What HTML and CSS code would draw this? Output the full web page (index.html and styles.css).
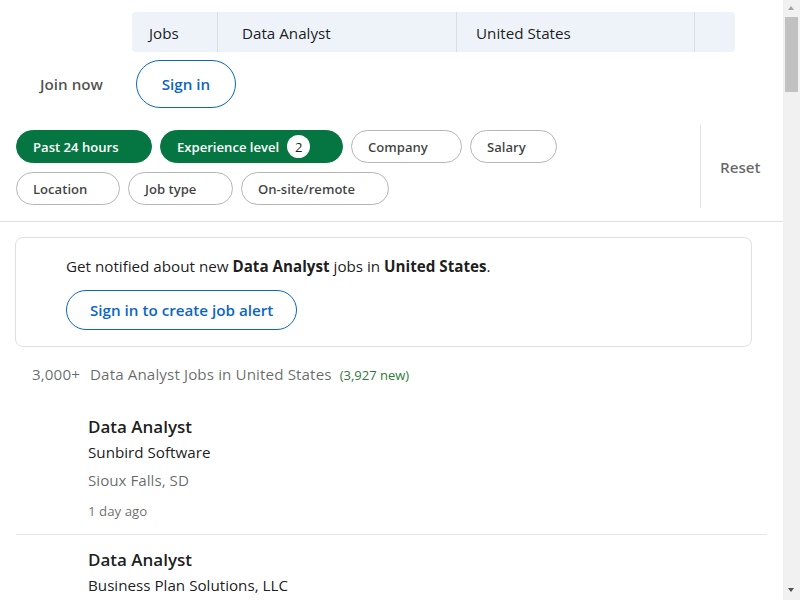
FILE: index.html
```html
<!DOCTYPE html>
<html lang="en">
<head>
<meta charset="utf-8">
<title>Data Analyst Jobs in United States</title>
<link rel="stylesheet" href="styles.css">
</head>
<body>
<header class="top">
  <div class="search">
    <div class="seg seg-jobs">Jobs</div>
    <div class="seg seg-kw">Data Analyst</div>
    <div class="seg seg-loc">United States</div>
    <div class="seg seg-btn"></div>
  </div>
  <div class="auth">
    <a class="join">Join now</a>
    <a class="signin">Sign in</a>
  </div>
</header>

<section class="filters">
  <div class="pills">
    <span class="pill on">Past 24 hours</span>
    <span class="pill on">Experience level <span class="badge">2</span></span>
    <span class="pill">Company</span>
    <span class="pill">Salary</span>
    <span class="pill">Location</span>
    <span class="pill">Job type</span>
    <span class="pill">On-site/remote</span>
  </div>
  <div class="reset-wrap"><span class="reset">Reset</span></div>
</section>

<main class="main">
  <div class="alert">
    <p class="alert-text">Get notified about new <b>Data Analyst</b> jobs in <b>United States</b>.</p>
    <a class="alert-btn">Sign in to create job alert</a>
  </div>

  <h1 class="count"><span class="num">3,000+</span> Data Analyst Jobs in United States <span class="new">(3,927 new)</span></h1>

  <ul class="jobs">
    <li class="job">
      <h3 class="title">Data Analyst</h3>
      <h4 class="company">Sunbird Software</h4>
      <div class="loc">Sioux Falls, SD</div>
      <time class="ago">1 day ago</time>
    </li>
    <li class="job">
      <h3 class="title">Data Analyst</h3>
      <h4 class="company">Business Plan Solutions, LLC</h4>
      <div class="loc">United States</div>
      <time class="ago">1 day ago</time>
    </li>
    <li class="job">
      <h3 class="title">Data Analyst</h3>
      <h4 class="company">Insight Global</h4>
      <div class="loc">Chicago, IL</div>
      <time class="ago">1 day ago</time>
    </li>
  </ul>
</main>

<div class="scrollbar" aria-hidden="true">
  <span class="sb-up"></span>
  <span class="sb-thumb"></span>
  <span class="sb-down"></span>
</div>
</body>
</html>
```

FILE: styles.css
```css
* { box-sizing: border-box; }
html, body { margin: 0; padding: 0; }
body {
  font-family: "Open Sans", "Noto Sans", sans-serif;
  color: rgba(0,0,0,0.9);
  background: #fff;
  width: 783px;
}
a { text-decoration: none; cursor: pointer; }

.top { padding: 12px 0 0 0; }
.search {
  margin-left: 132px;
  width: 603px;
  height: 40px;
  background: #edf3f8;
  border-radius: 4px;
  display: flex;
  font-size: 15.2px;
  color: rgba(0,0,0,0.9);
}
.seg { display: flex; align-items: center; border-right: 1px solid #d9dee3; padding-top: 1px; }
.seg-jobs { width: 86px; padding-left: 17px; }
.seg-kw { width: 239px; padding-left: 24px; }
.seg-loc { width: 238px; padding-left: 19px; }
.seg-btn { flex: 1; border-right: none; }

.auth {
  display: flex;
  align-items: center;
  padding: 8px 0 0 24px;
}
.join {
  width: 112px;
  color: rgba(0,0,0,0.7);
  font-size: 15.2px;
  font-weight: 600;
  padding-left: 16px;
  line-height: 48px;
}
.signin {
  height: 48px;
  width: 100px;
  border: 1px solid #0a66c2;
  border-radius: 24px;
  color: #0a66c2;
  font-size: 15.2px;
  font-weight: 600;
  display: flex;
  align-items: center;
  justify-content: center;
}

.filters {
  display: flex;
  margin-top: 17px;
  border-bottom: 1px solid #e0e0e0;
  padding: 0 0 13px 16px;
}
.pills {
  display: flex;
  flex-wrap: wrap;
  gap: 9px 8px;
  width: 684px;
  padding: 5px 120px 0 0;
  align-content: flex-start;
}
.pill {
  height: 33px;
  border: 1px solid #b5b5b5;
  border-radius: 17px;
  padding: 0 16px;
  display: inline-flex;
  align-items: center;
  font-size: 13.1px;
  font-weight: 600;
  color: rgba(0,0,0,0.75);
}
.pill:nth-child(1) { width: 136px; }
.pill:nth-child(2) { width: 183px; }
.pill:nth-child(3) { width: 111px; }
.pill:nth-child(4) { width: 87px; }
.pill:nth-child(5) { width: 104px; }
.pill:nth-child(6) { width: 105px; }
.pill:nth-child(7) { width: 148px; }
.pill.on {
  background: #057642;
  border-color: #057642;
  color: #fff;
}
.badge {
  width: 23px;
  height: 23px;
  border-radius: 50%;
  background: #fff;
  color: rgba(0,0,0,0.9);
  display: inline-flex;
  align-items: center;
  justify-content: center;
  font-weight: 400;
  margin-left: 8px;
}
.reset-wrap {
  border-left: 1px solid #e0e0e0;
  height: 83px;
  display: flex;
  align-items: center;
  padding-left: 19px;
}
.reset { color: rgba(0,0,0,0.6); font-size: 15.2px; font-weight: 600; }

.main { padding: 15px 33px 0 15px; }
.alert {
  border: 1px solid #e0e0e0;
  border-radius: 8px;
  padding: 16px 0 16px 50px;
  width: 737px;
}
.alert-text { margin: 0 0 12px; font-size: 15.2px; line-height: 24px; }
.alert-text b { font-weight: 700; }
.alert-btn {
  display: inline-flex;
  align-items: center;
  height: 40px;
  padding: 0 23px;
  border: 1px solid #0a66c2;
  border-radius: 20px;
  color: #0a66c2;
  font-size: 15.2px;
  font-weight: 600;
}

.count {
  margin: 15px 0 0 17px;
  height: 24px;
  font-size: 15.2px;
  font-weight: 400;
  color: rgba(0,0,0,0.6);
  line-height: 24px;
  letter-spacing: 0.1px;
}
.num { margin-right: 6px; }
.new { font-size: 13px; color: #2f7a3a; margin-left: 4px; letter-spacing: 0; }

.jobs { list-style: none; margin: 0; padding: 0; width: 752px; }
.job {
  padding: 13px 0 13px 72px;
  border-bottom: 1px solid #e8e8e8;
  margin-left: 1px;
}
.job:first-child { padding-top: 29px; }
.title { margin: 0; font-size: 17px; font-weight: 600; line-height: 24px; color: rgba(0,0,0,0.9); }
.company { margin: 1px 0 0; font-size: 15.2px; font-weight: 400; line-height: 24px; color: rgba(0,0,0,0.9); }
.loc { margin-top: 4px; font-size: 15.2px; line-height: 24px; color: rgba(0,0,0,0.6); }
.ago { display: block; margin-top: 9px; font-size: 13.3px; line-height: 20px; color: rgba(0,0,0,0.6); }

.scrollbar {
  position: fixed;
  top: 0;
  right: 0;
  width: 17px;
  height: 100%;
  background: #f1f1f1;
}
.sb-up, .sb-down {
  position: absolute;
  left: 5px;
  width: 0;
  height: 0;
  border-left: 3.5px solid transparent;
  border-right: 3.5px solid transparent;
}
.sb-up { top: 6px; border-bottom: 4px solid #a3a3a3; }
.sb-down { bottom: 8px; border-top: 4px solid #505050; }
.sb-thumb {
  position: absolute;
  left: 2px;
  top: 17px;
  width: 13px;
  height: 75px;
  background: #c1c1c1;
}
```
